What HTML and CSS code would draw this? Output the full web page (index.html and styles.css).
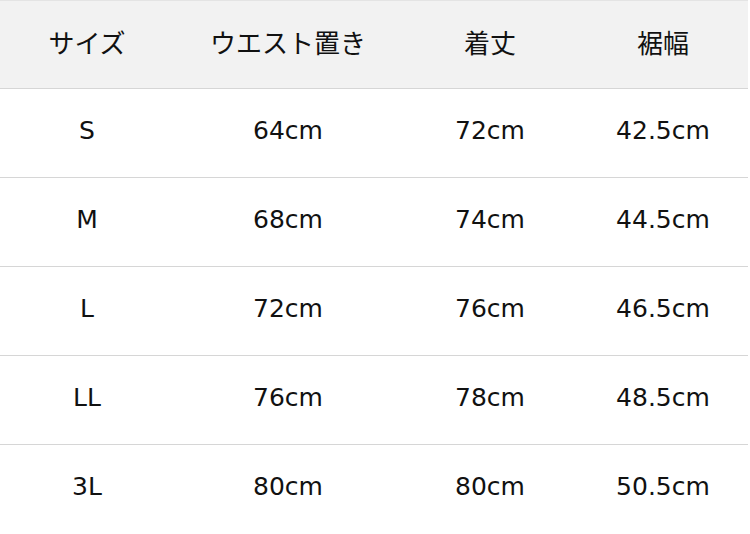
FILE: index.html
```html
<!DOCTYPE html>
<html lang="ja">
<head>
<meta charset="utf-8">
<link rel="stylesheet" href="styles.css">
</head>
<body>
<div class="table">
  <div class="row head">
    <div class="cell">サイズ</div>
    <div class="cell">ウエスト置き</div>
    <div class="cell">着丈</div>
    <div class="cell">裾幅</div>
  </div>
  <div class="row">
    <div class="cell">S</div>
    <div class="cell">64cm</div>
    <div class="cell">72cm</div>
    <div class="cell">42.5cm</div>
  </div>
  <div class="row">
    <div class="cell">M</div>
    <div class="cell">68cm</div>
    <div class="cell">74cm</div>
    <div class="cell">44.5cm</div>
  </div>
  <div class="row">
    <div class="cell">L</div>
    <div class="cell">72cm</div>
    <div class="cell">76cm</div>
    <div class="cell">46.5cm</div>
  </div>
  <div class="row">
    <div class="cell">LL</div>
    <div class="cell">76cm</div>
    <div class="cell">78cm</div>
    <div class="cell">48.5cm</div>
  </div>
  <div class="row last">
    <div class="cell">3L</div>
    <div class="cell">80cm</div>
    <div class="cell">80cm</div>
    <div class="cell">50.5cm</div>
  </div>
</div>
</body>
</html>
```
FILE: styles.css
```css
html, body {
  margin: 0;
  padding: 0;
  background: #ffffff;
}
body {
  width: 750px;
  height: 534px;
  overflow: hidden;
  font-family: "DejaVu Sans", "Noto Sans CJK JP", sans-serif;
  color: #111111;
}
.table {
  width: 748px;
  border-top: 1px solid #e4e4e4;
}
.row {
  display: grid;
  grid-template-columns: 174px 228px 176px 170px;
  height: 88px;
  border-bottom: 1px solid #d6d6d6;
  align-items: center;
}
.row.head {
  height: 87px;
  background: #f2f2f2;
}
.row.last {
  border-bottom: none;
}
.cell {
  text-align: center;
  font-size: 25px;
  line-height: 28px;
  padding-bottom: 4px;
}
.head .cell {
  font-family: "Noto Sans CJK JP", sans-serif;
  font-size: 26px;
  padding-bottom: 6px;
}
```
